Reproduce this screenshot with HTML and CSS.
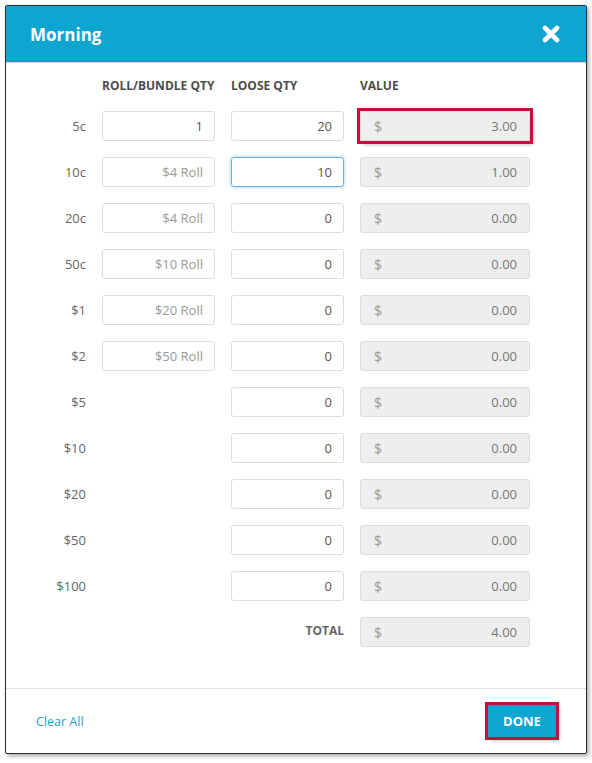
FILE: index.html
```html
<!DOCTYPE html>
<html lang="en">

<head>
    <meta charset="UTF-8">
    <meta name="viewport" content="width=device-width, initial-scale=1.0">
    <title>Morning</title>
    <link rel="stylesheet" href="styles.css">
</head>

<body>
    <div class="dialog">
        <div class="dialog-header">
            <h1>Morning</h1>
            <svg class="close" width="18" height="18" viewBox="0 0 18 18">
                <path d="M3 3 L15 15 M15 3 L3 15" stroke="#fff" stroke-width="4.6" stroke-linecap="round" />
            </svg>
        </div>

        <div class="dialog-body">
            <div class="count-grid">
                <div></div>
                <div class="col-title">Roll/Bundle Qty</div>
                <div class="col-title">Loose Qty</div>
                <div class="col-title">Value</div>

                <div class="denom">5c</div>
                <input class="qty" value="1" placeholder="$2 Roll">
                <input class="qty" value="20">
                <div class="value highlight"><span>$</span><span>3.00</span></div>

                <div class="denom">10c</div>
                <input class="qty" placeholder="$4 Roll">
                <input class="qty focused" value="10">
                <div class="value"><span>$</span><span>1.00</span></div>

                <div class="denom">20c</div>
                <input class="qty" placeholder="$4 Roll">
                <input class="qty" value="0">
                <div class="value"><span>$</span><span>0.00</span></div>

                <div class="denom">50c</div>
                <input class="qty" placeholder="$10 Roll">
                <input class="qty" value="0">
                <div class="value"><span>$</span><span>0.00</span></div>

                <div class="denom">$1</div>
                <input class="qty" placeholder="$20 Roll">
                <input class="qty" value="0">
                <div class="value"><span>$</span><span>0.00</span></div>

                <div class="denom">$2</div>
                <input class="qty" placeholder="$50 Roll">
                <input class="qty" value="0">
                <div class="value"><span>$</span><span>0.00</span></div>

                <div class="denom">$5</div>
                <div></div>
                <input class="qty" value="0">
                <div class="value"><span>$</span><span>0.00</span></div>

                <div class="denom">$10</div>
                <div></div>
                <input class="qty" value="0">
                <div class="value"><span>$</span><span>0.00</span></div>

                <div class="denom">$20</div>
                <div></div>
                <input class="qty" value="0">
                <div class="value"><span>$</span><span>0.00</span></div>

                <div class="denom">$50</div>
                <div></div>
                <input class="qty" value="0">
                <div class="value"><span>$</span><span>0.00</span></div>

                <div class="denom">$100</div>
                <div></div>
                <input class="qty" value="0">
                <div class="value"><span>$</span><span>0.00</span></div>

                <div></div>
                <div></div>
                <div class="total-label">Total</div>
                <div class="value"><span>$</span><span>4.00</span></div>
            </div>
        </div>

        <div class="dialog-footer">
            <a class="clear-link">Clear All</a>
            <button class="done highlight">DONE</button>
        </div>
    </div>
</body>

</html>
```

FILE: styles.css
```css
body {
    margin: 0;
    padding: 5px;
    font-family: "Open Sans", Arial, sans-serif;
    background: #fff;
}

.dialog {
    width: 580px;
    height: 747px;
    border: 1px solid #2b2d3a;
    border-radius: 2px;
    box-shadow: 2px 2px 4px rgba(0, 0, 0, 0.35);
    display: flex;
    flex-direction: column;
    background: #fff;
}

.dialog-header {
    height: 56px;
    background-color: #0ea5d1;
    border-bottom: 1px solid #d6d6d6;
    display: flex;
    align-items: center;
    justify-content: space-between;
    padding: 0 26px 0 24px;
    flex-shrink: 0;
}

.dialog-header h1 {
    margin: 0;
    color: #fff;
    font-size: 17px;
    font-weight: 700;
}

.dialog-body {
    flex: 1;
    padding: 12px 0 0 20px;
}

.count-grid {
    display: grid;
    grid-template-columns: 60px 113px 113px 170px;
    column-gap: 16px;
    row-gap: 16px;
    grid-template-rows: 20px;
    grid-auto-rows: 30px;
    align-items: center;
}

.col-title {
    font-size: 12px;
    font-weight: 700;
    color: #4d4d4d;
    text-transform: uppercase;
}

.denom {
    text-align: right;
    font-size: 13px;
    color: #666;
}

.qty {
    box-sizing: border-box;
    width: 100%;
    height: 30px;
    border: 1px solid #dcdce2;
    border-radius: 3px;
    text-align: right;
    padding: 0 11px 0 8px;
    font-family: "Open Sans", Arial, sans-serif;
    font-size: 13px;
    color: #555;
    background: #fff;
}

.qty::placeholder {
    color: #999;
}

.qty.focused {
    border-color: #66afe9;
    box-shadow: 0 0 4px rgba(102, 175, 233, 0.6);
    outline: none;
}

.value {
    box-sizing: border-box;
    height: 30px;
    border: 1px solid #dcdce2;
    border-radius: 3px;
    background: #eeeeee;
    display: flex;
    align-items: center;
    justify-content: space-between;
    padding: 0 12px 0 13px;
    font-size: 13px;
    color: #777;
}

.value span:first-child {
    color: #999;
    font-size: 14px;
}

.total-label {
    text-align: right;
    font-size: 12px;
    font-weight: 700;
    color: #666;
    text-transform: uppercase;
    margin-top: -3px;
}

/* annotation boxes round the value and button */
.highlight {
    border-radius: 0;
    outline: 3px solid #c5103b;
    outline-offset: 0;
    box-shadow: 3px 3px 4px rgba(0, 0, 0, 0.35);
}

.dialog-footer {
    height: 64px;
    border-top: 1px solid #e2e2e2;
    display: flex;
    align-items: center;
    justify-content: space-between;
    padding: 0 30px;
    flex-shrink: 0;
}

.clear-link {
    color: #1aa3d4;
    font-size: 12.5px;
    cursor: pointer;
}

.done {
    width: 68px;
    height: 32px;
    background-color: #0ea5d1;
    border: none;
    color: #fff;
    font-family: "Open Sans", Arial, sans-serif;
    font-size: 13px;
    font-weight: 700;
    cursor: pointer;
}
```
